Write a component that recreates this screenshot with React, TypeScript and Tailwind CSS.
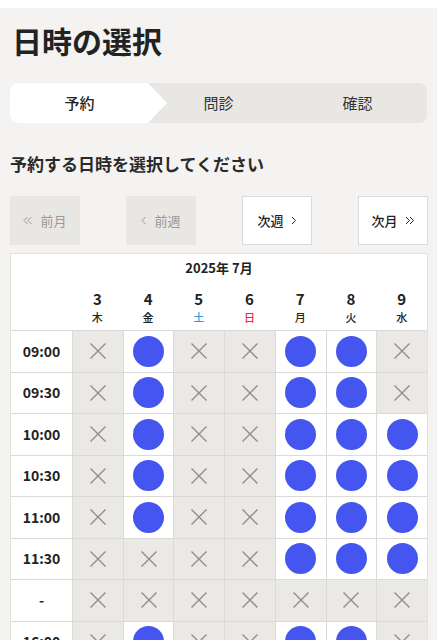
import React from "react";

const FONT = { fontFamily: '"Noto Sans CJK JP", "Noto Sans", sans-serif' };

const DAYS = [
  { d: "3", w: "木", c: "text-[#222]" },
  { d: "4", w: "金", c: "text-[#222]" },
  { d: "5", w: "土", c: "text-[#2b9fd9]" },
  { d: "6", w: "日", c: "text-[#e0323f]" },
  { d: "7", w: "月", c: "text-[#222]" },
  { d: "8", w: "火", c: "text-[#222]" },
  { d: "9", w: "水", c: "text-[#222]" },
];

// 1 = open slot, 0 = full
const ROWS: { t: string; s: number[] }[] = [
  { t: "09:00", s: [0, 1, 0, 0, 1, 1, 0] },
  { t: "09:30", s: [0, 1, 0, 0, 1, 1, 0] },
  { t: "10:00", s: [0, 1, 0, 0, 1, 1, 1] },
  { t: "10:30", s: [0, 1, 0, 0, 1, 1, 1] },
  { t: "11:00", s: [0, 1, 0, 0, 1, 1, 1] },
  { t: "11:30", s: [0, 0, 0, 0, 1, 1, 1] },
  { t: "-", s: [0, 0, 0, 0, 0, 0, 0] },
  { t: "16:00", s: [0, 1, 0, 0, 1, 1, 0] },
];

function Cross() {
  return (
    <svg width="18" height="18" viewBox="0 0 18 18" fill="none">
      <path d="M1.5 1.5 L16.5 16.5 M16.5 1.5 L1.5 16.5" stroke="#8f8d8b" strokeWidth="1.4" />
    </svg>
  );
}

// thin chevrons; n = how many, dir = which way
function Chevrons({ n, dir }: { n: number; dir: "l" | "r" }) {
  const w = n === 2 ? 10 : 6;
  const one = (x: number) =>
    dir === "l" ? `M${x + 4.5} 2 L${x + 1} 5.5 L${x + 4.5} 9` : `M${x + 1} 2 L${x + 4.5} 5.5 L${x + 1} 9`;
  return (
    <svg width={w} height="11" viewBox={`0 0 ${w} 11`} fill="none">
      <path d={one(0)} stroke="currentColor" strokeWidth="1" />
      {n === 2 && <path d={one(4)} stroke="currentColor" strokeWidth="1" />}
    </svg>
  );
}

function NavButton({ text, n, dir, on }: { text: string; n: number; dir: "l" | "r"; on: boolean }) {
  return (
    <button
      type="button"
      className={
        "flex h-[49px] w-[70px] items-center justify-center gap-[7px] text-[13px] " +
        (on
          ? "border border-[#dcdad7] bg-white font-medium text-[#222]"
          : "bg-[#e9e7e4] text-[#9a9896]")
      }
    >
      {dir === "l" && <Chevrons n={n} dir="l" />}
      <span>{text}</span>
      {dir === "r" && <Chevrons n={n} dir="r" />}
    </button>
  );
}

export default function App() {
  return (
    <div className="h-[640px] overflow-hidden bg-white pt-2" style={FONT}>
      <div className="h-full w-[437px] bg-[#f4f3f1] px-[10px]">
        <h1 className="pl-0.5 pt-[14px] text-[30px] font-bold leading-[36px] text-[#222]">日時の選択</h1>

        {/* step tabs */}
        <div className="relative mt-[25px] grid h-10 grid-cols-3 overflow-hidden rounded-lg bg-[#e9e7e4] text-[15px]">
          <svg className="absolute left-0 top-0" width="160" height="40" viewBox="0 0 160 40">
            <path d="M0 0 H138 L157 20 L138 40 H0 Z" fill="#ffffff" />
          </svg>
          <div className="relative flex items-center justify-center font-medium text-[#222]">予約</div>
          <div className="relative flex items-center justify-center text-[#333]">問診</div>
          <div className="relative flex items-center justify-center text-[#333]">確認</div>
        </div>

        <p className="mt-[29px] text-[17px] font-semibold leading-6 text-[#2a2a2a]">
          予約する日時を選択してください
        </p>

        <div className="mt-[20px] flex w-[418px] justify-between">
          <NavButton text="前月" n={2} dir="l" on={false} />
          <NavButton text="前週" n={1} dir="l" on={false} />
          <NavButton text="次週" n={1} dir="r" on />
          <NavButton text="次月" n={2} dir="r" on />
        </div>

        {/* calendar */}
        <div className="mt-[8px] w-[418px] border border-[#e3e1de] bg-white">
          <div className="pt-[4px] text-center text-[13px] font-bold leading-5 text-[#222]">2025年 7月</div>
          <div className="grid grid-cols-[61px_repeat(7,1fr)] pb-[4px] pt-[12px]">
            <div />
            {DAYS.map((d) => (
              <div key={d.d} className="flex flex-col items-center">
                <span className="text-[15px] font-bold leading-[18px] text-[#222]">{d.d}</span>
                <span className={"text-[11px] font-medium leading-[18px] " + d.c}>{d.w}</span>
              </div>
            ))}
          </div>
          {ROWS.map((r) => (
            <div
              key={r.t}
              className="grid h-[41.5px] grid-cols-[61px_repeat(7,1fr)] border-t border-[#dcdad7]"
            >
              <div className="flex items-center justify-center text-[14px] font-bold text-[#222]">
                {r.t}
              </div>
              {r.s.map((v, i) => (
                <div
                  key={i}
                  className={
                    "flex items-center justify-center border-l border-[#dcdad7] " +
                    (v ? "bg-white" : "bg-[#ebe9e6]")
                  }
                >
                  {v ? <div className="h-[31px] w-[31px] rounded-full bg-[#4456ef]" /> : <Cross />}
                </div>
              ))}
            </div>
          ))}
        </div>
      </div>
    </div>
  );
}
